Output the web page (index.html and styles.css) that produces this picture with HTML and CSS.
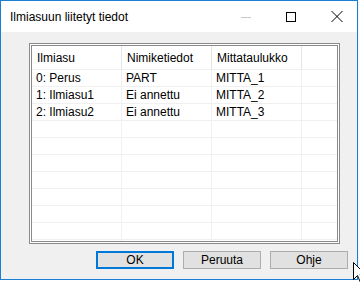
FILE: index.html
```html
<!DOCTYPE html>
<html lang="fi">
<head>
  <meta charset="UTF-8">
  <meta name="viewport" content="width=device-width, initial-scale=1.0">
  <title>Ilmiasuun liitetyt tiedot</title>
  <link rel="stylesheet" href="styles.css">
</head>
<body>

  <div class="window">
    <div class="titlebar">
      <span class="title">Ilmiasuun liitetyt tiedot</span>
      <svg class="cap cap-min" width="10" height="10" viewBox="0 0 10 10"><path d="M0 5.5H10" stroke="#c8c8c8" stroke-width="1"/></svg>
      <svg class="cap cap-max" width="10" height="10" viewBox="0 0 10 10"><rect x="0.5" y="0.5" width="9" height="9" fill="none" stroke="#000" stroke-width="1"/></svg>
      <svg class="cap cap-close" width="12" height="11" viewBox="0 0 12 11"><path d="M0.5 0L11.5 11M11.5 0L0.5 11" stroke="#000" stroke-width="1"/></svg>
    </div>

    <div class="client">
      <div class="listbox">
        <table class="grid">
          <thead>
            <tr><th class="c1">Ilmiasu</th><th class="c2">Nimiketiedot</th><th class="c3">Mittataulukko</th><th></th></tr>
          </thead>
          <tbody>
            <tr><td>0: Perus</td><td>PART</td><td>MITTA_1</td><td></td></tr>
            <tr><td>1: Ilmiasu1</td><td>Ei annettu</td><td>MITTA_2</td><td></td></tr>
            <tr><td>2: Ilmiasu2</td><td>Ei annettu</td><td>MITTA_3</td><td></td></tr>
            <tr><td></td><td></td><td></td><td></td></tr>
            <tr><td></td><td></td><td></td><td></td></tr>
            <tr><td></td><td></td><td></td><td></td></tr>
            <tr><td></td><td></td><td></td><td></td></tr>
            <tr><td></td><td></td><td></td><td></td></tr>
            <tr><td></td><td></td><td></td><td></td></tr>
            <tr><td></td><td></td><td></td><td></td></tr>
            <tr><td></td><td></td><td></td><td></td></tr>
          </tbody>
        </table>
      </div>

      <div class="buttons">
        <button class="btn btn-default">OK</button>
        <button class="btn">Peruuta</button>
        <button class="btn">Ohje</button>
      </div>
    </div>
  </div>

  <svg class="cursor" width="14" height="22" viewBox="0 0 14 22"><path d="M0.5 0.5V17.5L4.5 13.5L7.5 20.5L10 19.5L7 12.5H12.5Z" fill="#fff" stroke="#000" stroke-width="1"/></svg>

</body>
</html>
```

FILE: styles.css
```css
body {
  margin: 0;
  background-color: #fff;
  font-family: "Liberation Sans", Arial, sans-serif;
  font-size: 12px;
  color: #000;
}

.window {
  width: 358px;
  height: 280px;
  box-sizing: border-box;
  border: 1px solid #1a7fd4;
  background-color: #f0f0f0;
  display: flex;
  flex-direction: column;
  box-shadow: 0 1px 2px rgba(120, 160, 200, 0.35);
}

.titlebar {
  height: 31px;
  background-color: #fff;
  display: flex;
  align-items: center;
  padding-left: 9px;
}

.title {
  flex: 1;
}

.cap {
  display: block;
}

.cap-min,
.cap-max {
  margin-right: 35px;
}

.cap-close {
  margin-right: 14px;
}

.client {
  flex: 1;
  padding: 11px 9px 0 28px;
}

.listbox {
  width: 311px;
  height: 201px;
  box-sizing: border-box;
  border: 3px double #8a8a8a;
  background-color: #fff;
  overflow: hidden;
}

.grid {
  width: 100%;
  table-layout: fixed;
  border-collapse: separate;
  border-spacing: 0;
}

.grid th,
.grid td {
  box-sizing: border-box;
  border-right: 1px solid #f0f0f0;
  border-bottom: 1px solid #f0f0f0;
  text-align: left;
  white-space: nowrap;
  overflow: hidden;
  padding: 0 0 0 4px;
}

.grid th {
  height: 24px;
  font-weight: normal;
  padding-left: 5px;
  border-right-color: #e5e5e5;
}

.grid th:last-child,
.grid td:last-child {
  border-right: none;
}

.grid td {
  height: 17px;
}

.grid .c1,
.grid .c2,
.grid .c3 {
  width: 90px;
}

.buttons {
  display: flex;
  justify-content: flex-end;
  gap: 9px;
  margin-top: 7px;
}

.btn {
  width: 78px;
  height: 18px;
  box-sizing: border-box;
  border: 1px solid #adadad;
  background-color: #e1e1e1;
  font-family: "Liberation Sans", Arial, sans-serif;
  font-size: 12px;
  color: #000;
  padding: 0;
}

.btn-default {
  border: 2px solid #0078d7;
}

.cursor {
  position: absolute;
  left: 353px;
  top: 262px;
}
```
